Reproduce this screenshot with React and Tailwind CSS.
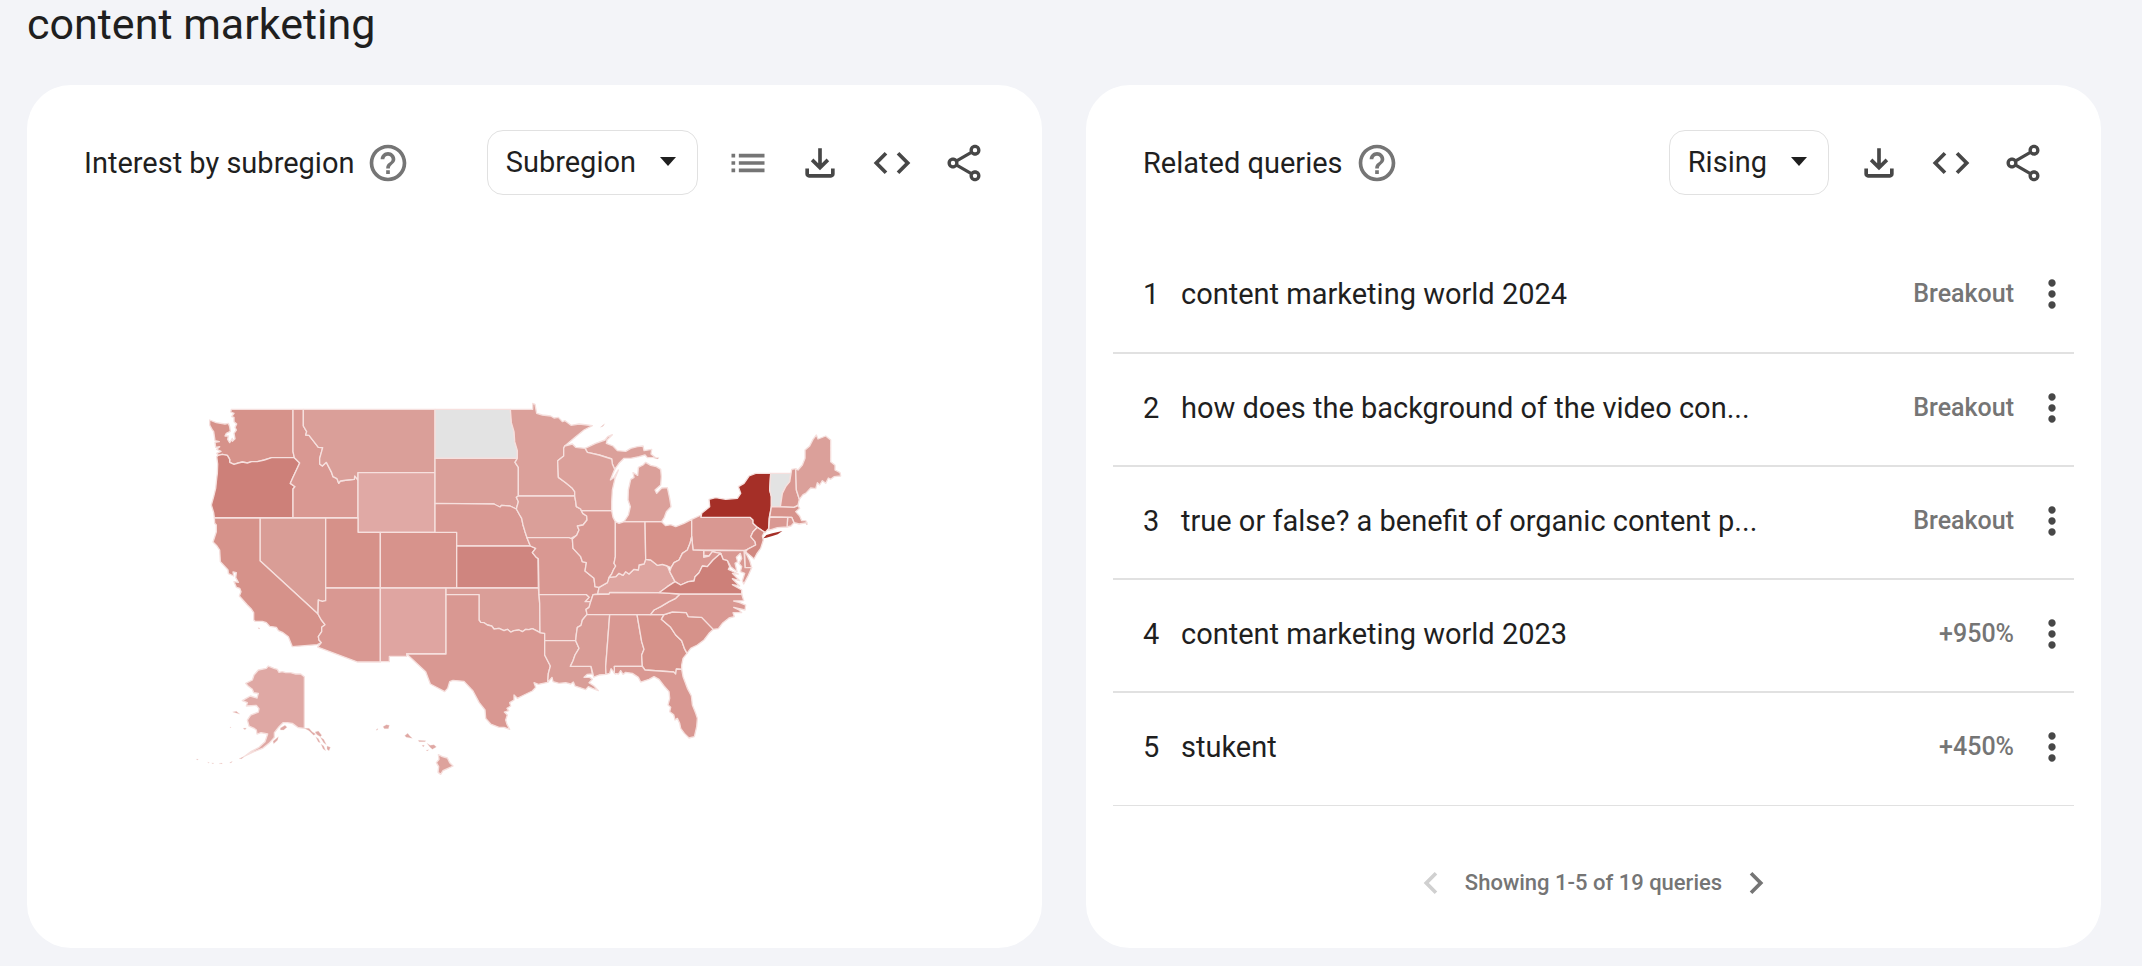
import React, { useState } from 'react';

const STATES = [
  { id: 'WA', fill: '#d6928a', points: '157,58 342,58 342,185 346,203 278,203 256,210 235,215 218,215 205,219 190,216 178,219 165,223 152,217 152,208 145,196 130,193 118,196 113,190 126,184 113,178 122,170 110,172 108,157 121,155 108,152 104,125 99,118 92,105 92,90 112,98 138,102 148,100 152,110 154,124 142,130 138,138 148,138 146,148 152,158 160,145 160,154 168,146 165,130 172,120 168,112 173,102 165,95 165,82 158,80 165,70 155,66' },
  { id: 'OR', fill: '#cd8079', points: '118,196 130,193 145,196 152,208 152,217 165,223 178,219 190,216 205,219 218,215 235,215 256,210 278,203 346,203 362,219 342,262 334,280 348,290 342,297 342,383 106,383 104,368 97,345 104,320 110,295 113,265 115,250 116,222 113,200' },
  { id: 'ID', fill: '#d99892', points: '342,58 373,58 373,108 383,125 380,135 390,136 418,172 431,173 422,205 422,222 430,228 442,217 458,248 462,260 474,266 479,280 484,273 505,270 526,268 527,258 537,270 537,383 342,383 342,297 348,290 334,280 342,262 362,219 346,203 342,185' },
  { id: 'MT', fill: '#da9f99', points: '373,58 768,58 768,248 537,248 537,270 527,258 526,268 505,270 484,273 479,280 474,266 462,260 458,248 442,217 430,228 422,222 422,205 431,173 418,172 390,136 380,135 383,125 373,108' },
  { id: 'WY', fill: '#e0a9a5', points: '537,248 768,248 768,427 537,427' },
  { id: 'NV', fill: '#d99d96', points: '243,384 440,384 440,632 430,634 418,630 417,672 243,512' },
  { id: 'UT', fill: '#d69189', points: '440,384 537,384 537,427 604,427 604,594 440,594' },
  { id: 'CA', fill: '#d6928a', points: '106,384 243,384 243,512 417,672 427,690 438,704 428,712 428,725 418,740 420,750 427,758 415,764 340,770 328,740 312,728 298,722 292,712 272,709 262,698 250,694 228,694 224,690 224,668 216,656 205,645 181,618 186,605 182,595 172,592 165,575 178,577 170,563 172,548 162,546 164,558 148,551 147,540 124,515 122,480 114,468 102,456 112,425 112,405 107,400' },
  { id: 'AZ', fill: '#d99892', points: '440,594 604,594 604,816 536,816 416,771 427,758 420,750 418,740 428,725 428,712 438,704 427,690 417,672 418,630 430,634 440,632' },
  { id: 'CO', fill: '#d7938c', points: '604,427 833,427 833,594 604,594' },
  { id: 'NM', fill: '#dfa5a1', points: '604,594 801,594 801,791 683,791 683,799 631,799 631,815 604,815' },
  { id: 'ND', fill: '#e3e3e3', points: '768,58 994,58 997,98 1005,125 1007,155 1015,182 1015,205 768,205' },
  { id: 'SD', fill: '#da9f99', points: '768,205 1015,205 1008,217 1018,232 1018,318 1012,322 1018,335 1012,357 993,348 968,346 963,351 950,348 945,342 768,340' },
  { id: 'NE', fill: '#d99892', points: '768,340 945,342 963,351 968,346 993,348 1012,357 1022,375 1028,385 1032,405 1038,425 1044,443 1054,468 833,468 833,427 768,427' },
  { id: 'KS', fill: '#cf857f', points: '833,468 1054,468 1070,475 1060,488 1070,500 1077,506 1078,594 833,594' },
  { id: 'OK', fill: '#da9e98', points: '801,594 1078,594 1082,640 1083,728 1072,722 1060,716 1050,719 1040,718 1030,725 1020,720 1005,722 995,726 985,718 975,722 960,715 945,717 938,708 925,705 915,698 905,697 900,690 900,614 801,614' },
  { id: 'TX', fill: '#d99892', points: '801,614 900,614 900,690 905,697 915,698 925,705 938,708 945,717 960,715 975,722 985,718 995,726 1005,722 1020,720 1030,725 1040,718 1050,719 1060,716 1072,722 1083,728 1097,730 1097,795 1114,828 1108,850 1106,877 1078,883 1065,878 1070,892 1060,903 1035,915 1015,925 1005,915 1005,930 992,938 995,948 984,955 989,962 976,966 985,975 980,990 984,1003 992,1018 975,1012 960,1012 935,1002 920,985 918,960 900,937 882,903 855,874 822,871 812,875 806,895 797,905 754,882 740,845 683,792 801,792' },
  { id: 'MN', fill: '#dba09a', points: '994,58 1061,58 1061,40 1068,43 1073,70 1090,75 1115,78 1125,84 1138,82 1150,95 1158,92 1176,106 1200,102 1225,105 1240,107 1215,120 1190,140 1157,168 1154,175 1154,198 1136,212 1138,262 1160,278 1180,295 1187,305 1187,318 1018,318 1018,232 1008,217 1015,205 1015,182 1007,155 1005,125 997,98' },
  { id: 'IA', fill: '#da9f99', points: '1018,318 1187,318 1190,335 1192,350 1205,357 1211,370 1223,378 1224,390 1212,405 1195,408 1200,420 1193,436 1180,443 1174,447 1170,443 1044,443 1038,425 1032,405 1028,385 1022,375 1012,357 1018,335 1012,322' },
  { id: 'MO', fill: '#d99892', points: '1044,443 1170,443 1180,447 1182,475 1205,500 1210,515 1222,518 1218,543 1245,565 1248,590 1260,592 1256,612 1242,614 1235,635 1218,635 1230,622 1222,614 1080,614 1078,506 1070,500 1060,488 1070,475 1054,468' },
  { id: 'AR', fill: '#da9d98', points: '1080,614 1222,614 1230,622 1218,635 1235,635 1230,652 1221,658 1224,673 1210,690 1206,706 1195,712 1192,732 1190,752 1097,752 1097,730 1083,728 1082,640' },
  { id: 'LA', fill: '#d99d97', points: '1097,752 1190,752 1200,775 1188,795 1182,812 1174,829 1236,829 1240,852 1225,853 1215,862 1232,862 1240,868 1230,878 1245,888 1258,902 1240,895 1228,890 1220,899 1200,892 1188,888 1183,876 1175,882 1160,878 1140,880 1122,875 1119,862 1106,877 1108,850 1114,828 1097,795' },
  { id: 'MS', fill: '#d99c96', points: '1224,673 1292,674 1290,700 1280,830 1281,853 1260,855 1244,861 1236,829 1174,829 1182,812 1188,795 1200,775 1190,752 1192,732 1195,712 1206,706 1210,690' },
  { id: 'AL', fill: '#d99892', points: '1292,674 1374,674 1388,755 1395,778 1388,795 1390,829 1306,829 1309,852 1296,836 1292,850 1281,853 1280,830 1290,700' },
  { id: 'GA', fill: '#d6928a', points: '1374,674 1455,674 1447,688 1475,712 1490,735 1508,752 1516,775 1524,790 1512,805 1508,825 1508,838 1492,837 1490,852 1484,846 1398,840 1390,829 1388,795 1395,778 1388,755' },
  { id: 'FL', fill: '#d99892', points: '1306,829 1390,829 1398,840 1484,846 1490,852 1492,837 1508,838 1512,860 1525,895 1537,918 1540,945 1550,970 1555,985 1553,1010 1546,1040 1530,1044 1516,1030 1505,1015 1502,1000 1495,985 1488,990 1484,974 1472,965 1475,952 1467,945 1472,925 1470,905 1455,888 1440,868 1425,860 1410,868 1385,876 1378,862 1360,850 1340,847 1332,853 1325,842 1318,852 1306,850' },
  { id: 'SC', fill: '#d6928a', points: '1455,674 1480,666 1522,668 1528,680 1568,682 1603,718 1590,730 1575,750 1555,765 1535,775 1524,790 1516,775 1508,752 1490,735 1475,712 1447,688' },
  { id: 'NC', fill: '#d99892', points: '1503,612 1688,612 1694,632 1664,633 1680,637 1700,645 1698,660 1664,652 1680,660 1688,668 1662,668 1666,680 1650,684 1630,700 1618,716 1603,718 1568,682 1528,680 1522,668 1480,666 1455,674 1414,674 1425,660 1445,650 1470,635 1490,625' },
  { id: 'TN', fill: '#d99892', points: '1242,614 1290,612 1292,607 1440,608 1503,612 1490,625 1470,635 1445,650 1425,660 1414,674 1224,673 1221,658 1230,652 1235,635' },
  { id: 'KY', fill: '#dea5a0', points: '1256,612 1260,592 1285,578 1290,562 1310,560 1320,550 1332,556 1340,545 1350,552 1365,538 1378,540 1380,525 1395,522 1400,508 1415,510 1435,526 1450,523 1465,528 1472,545 1488,575 1465,590 1440,608 1292,607 1290,612' },
  { id: 'IL', fill: '#d99892', points: '1207,362 1298,362 1302,382 1309,395 1309,500 1305,520 1310,528 1303,540 1298,552 1290,562 1285,578 1260,592 1248,590 1245,565 1218,543 1222,518 1210,515 1205,500 1182,475 1180,447 1193,436 1200,420 1195,408 1212,405 1224,390 1223,378 1211,370' },
  { id: 'IN', fill: '#d99892', points: '1309,395 1320,400 1335,395 1398,395 1400,508 1395,522 1380,525 1378,540 1365,538 1350,552 1340,545 1332,556 1320,550 1310,560 1290,562 1298,552 1303,540 1310,528 1305,520 1309,500' },
  { id: 'OH', fill: '#d7928a', points: '1398,395 1448,395 1460,407 1475,404 1490,410 1515,400 1538,388 1538,440 1533,460 1525,480 1510,490 1500,510 1485,518 1476,533 1465,528 1450,523 1435,526 1415,510 1400,508' },
  { id: 'MI', fill: '#dba09a', points: '1335,395 1348,375 1354,350 1347,330 1348,300 1355,268 1365,262 1362,248 1376,256 1378,232 1392,225 1400,217 1415,226 1432,230 1445,238 1447,260 1445,285 1428,300 1433,310 1448,294 1465,293 1472,325 1476,350 1462,365 1456,382 1448,395' },
  { id: 'MI-upper', fill: '#dba09a', points: '1218,175 1250,160 1278,150 1286,140 1300,134 1284,150 1282,160 1302,168 1315,182 1340,184 1355,175 1375,170 1392,168 1395,182 1418,178 1416,192 1428,202 1405,203 1398,195 1380,200 1355,205 1335,205 1320,220 1307,238 1300,222 1298,207 1260,195 1225,187' },
  { id: 'WI', fill: '#dba09a', points: '1157,168 1180,162 1190,172 1218,175 1225,187 1260,195 1298,207 1300,222 1307,238 1302,250 1294,270 1305,262 1318,240 1308,265 1300,300 1298,335 1298,362 1207,362 1205,357 1192,350 1190,335 1187,318 1187,305 1180,295 1160,278 1138,262 1136,212 1154,198 1154,175' },
  { id: 'PA', fill: '#d99892', points: '1538,388 1566,375 1566,382 1713,382 1722,390 1722,400 1735,412 1722,425 1715,440 1728,455 1730,465 1705,478 1697,481 1542,480 1538,440' },
  { id: 'NY', fill: '#a52f27', points: '1566,382 1568,370 1592,350 1590,328 1610,323 1640,328 1675,325 1685,310 1678,290 1695,280 1710,258 1730,250 1775,250 1772,300 1777,320 1777,350 1770,385 1769,415 1758,428 1735,412 1722,400 1722,390 1713,382' },
  { id: 'VT', fill: '#e3e3e3', points: '1775,250 1835,250 1832,275 1820,290 1810,310 1804,350 1777,350 1777,320 1772,300' },
  { id: 'NH', fill: '#d99892', points: '1838,238 1850,236 1852,300 1861,328 1857,345 1845,352 1804,350 1810,310 1820,290 1832,275' },
  { id: 'ME', fill: '#dba09a', points: '1850,236 1857,240 1870,225 1878,205 1878,180 1892,168 1902,148 1912,135 1917,147 1940,138 1955,150 1955,215 1968,226 1968,240 1983,248 1985,258 1965,260 1955,268 1948,264 1940,280 1930,272 1922,285 1915,278 1910,296 1895,294 1880,310 1872,314 1861,328 1852,300' },
  { id: 'MA', fill: '#d7938c', points: '1777,350 1845,352 1857,347 1862,355 1850,365 1862,378 1868,392 1880,392 1884,398 1860,402 1845,398 1838,382 1772,381' },
  { id: 'RI', fill: '#d99892', points: '1826,382 1838,382 1845,398 1836,408 1824,411' },
  { id: 'CT', fill: '#d99892', points: '1772,381 1826,382 1824,411 1795,413 1769,421' },
  { id: 'NJ', fill: '#d18880', points: '1735,412 1756,426 1750,438 1753,450 1745,475 1733,492 1725,507 1715,498 1700,486 1705,478 1730,465 1728,455 1715,440 1722,425' },
  { id: 'DE', fill: '#d99892', points: '1697,481 1702,492 1712,512 1718,533 1698,533' },
  { id: 'MD', fill: '#d99892', points: '1574,481 1695,482 1698,533 1718,533 1708,556 1694,582 1690,572 1697,550 1684,545 1688,530 1680,520 1688,505 1684,490 1672,502 1676,515 1668,520 1674,545 1655,530 1645,512 1632,508 1625,490 1612,488 1600,485 1590,498 1578,496 1574,502' },
  { id: 'WV', fill: '#d99892', points: '1538,440 1542,480 1574,481 1574,502 1590,498 1600,485 1612,488 1625,490 1602,510 1585,530 1570,528 1560,548 1548,560 1545,573 1528,575 1505,585 1488,575 1472,545 1476,533 1485,518 1500,510 1510,490 1525,480 1533,460' },
  { id: 'VA', fill: '#cd8079', points: '1440,608 1465,590 1488,575 1505,585 1528,575 1545,573 1548,560 1560,548 1570,528 1585,530 1602,510 1625,490 1632,508 1645,512 1652,530 1648,538 1678,552 1660,550 1682,572 1660,566 1682,588 1660,584 1688,600 1688,612 1503,612' },
  { id: 'AK', fill: '#dfa8a4', points: '376,860 365,852 350,852 335,848 320,848 310,845 300,847 295,838 285,835 268,828 262,835 238,840 225,855 220,870 200,880 207,888 220,898 224,908 238,910 234,924 214,918 200,926 190,932 205,938 202,948 232,946 240,956 238,966 215,975 205,990 210,1008 224,1014 232,1020 234,1032 246,1028 266,1032 258,1055 240,1072 215,1085 198,1098 225,1085 252,1074 270,1060 286,1042 286,1028 300,1010 312,998 325,998 340,1000 358,1013 376,1015' },
  { id: 'HI', fill: '#dda29c', points: '778,1094 790,1100 805,1104 812,1118 822,1128 805,1136 792,1142 785,1153 777,1147 779,1130 772,1118 780,1108' },
];

const LONG_ISLAND = '1753,445 1762,435 1780,430 1810,423 1796,433 1780,438 1762,443';

const ISLANDS = [
  '612,1010 622,1004 631,1006 628,1016 616,1016',
  '592,1021 593,1017 597,1016 595,1020',
  '677,1037 686,1030 692,1037 700,1045 682,1042',
  '718,1051 740,1052 738,1055 720,1055',
  '729,1066 736,1066 733,1071',
  '744,1060 753,1066 765,1064 772,1071 760,1078 753,1072',
  '741,1081 749,1079 745,1083',
  '304,1014 318,1006 324,1012 314,1020 304,1020',
  '282,1054 298,1040 296,1050 284,1061',
  '161,966 172,964 182,972 174,970',
  '192,1015 202,1014 198,1019',
  '376,1015 390,1015 400,1026 410,1032 404,1036 390,1022',
  '408,1026 418,1023 428,1036 424,1040 414,1034',
  '410,1040 418,1046 424,1058 418,1056',
  '424,1042 434,1048 442,1064 434,1058',
  '426,1062 434,1068 440,1082 432,1076',
  '444,1068 454,1072 450,1082 444,1078',
  '180,1106 198,1098 188,1106',
  '152,1118 160,1114 156,1119',
  '120,1121 128,1119 130,1121',
  '98,1119 104,1119 102,1121',
  '86,1117 91,1118 88,1119',
  '52,1107 58,1108 55,1110',
  '153,1011 156,1012 154,1014',
  '237,713 243,715 240,717',
  '1264,112 1277,101 1272,109',
  '1422,203 1440,203 1436,207',
  '1880,400 1887,402 1882,404',
];

const QUERIES = [
  { rank: 1, text: 'content marketing world 2024', change: 'Breakout' },
  { rank: 2, text: 'how does the background of the video con...', change: 'Breakout' },
  { rank: 3, text: 'true or false? a benefit of organic content p...', change: 'Breakout' },
  { rank: 4, text: 'content marketing world 2023', change: '+950%' },
  { rank: 5, text: 'stukent', change: '+450%' },
];

const PATHS = {
  help: 'M11 18h2v-2h-2v2zm1-16C6.48 2 2 6.48 2 12s4.48 10 10 10 10-4.48 10-10S17.52 2 12 2zm0 18c-4.41 0-8-3.59-8-8s3.59-8 8-8 8 3.59 8 8-3.59 8-8 8zm0-14c-2.21 0-4 1.79-4 4h2c0-1.1.9-2 2-2s2 .9 2 2c0 2-3 1.75-3 5h2c0-2.25 3-2.5 3-5 0-2.21-1.79-4-4-4z',
  list: 'M3 9h2V7H3v2zm0 4h2v-2H3v2zm0 4h2v-2H3v2zm4-8h14V7H7v2zm0 4h14v-2H7v2zm0 4h14v-2H7v2z',
  download: 'M12 16l-5-5 1.4-1.45 2.6 2.6V4h2v8.15l2.6-2.6L17 11l-5 5zm-6 4c-.55 0-1.02-.2-1.41-.59C4.2 19.02 4 18.55 4 18v-3h2v3h12v-3h2v3c0 .55-.2 1.02-.59 1.41-.39.39-.86.59-1.41.59H6z',
  code: 'M8 18l-6-6 6-6 1.43 1.43L4.85 12l4.58 4.57L8 18zm8 0l-1.43-1.43L19.15 12l-4.58-4.57L16 6l6 6-6 6z',
  share: 'M18 16c-.79 0-1.5.31-2.03.81L8.91 12.7c.05-.23.09-.46.09-.7s-.04-.47-.09-.7l7.05-4.11c.54.5 1.25.81 2.04.81 1.66 0 3-1.34 3-3s-1.34-3-3-3-3 1.34-3 3c0 .24.04.48.09.7L8.04 9.81C7.5 9.31 6.79 9 6 9c-1.66 0-3 1.34-3 3s1.34 3 3 3c.79 0 1.5-.31 2.04-.81l7.05 4.12c-.05.22-.09.45-.09.69 0 1.66 1.34 3 3 3s3-1.34 3-3-1.34-3-3-3zm0-12.2a1.2 1.2 0 110 2.4 1.2 1.2 0 010-2.4zM6 13.2a1.2 1.2 0 110-2.4 1.2 1.2 0 010 2.4zm12 7a1.2 1.2 0 110-2.4 1.2 1.2 0 010 2.4z',
  more: 'M12 8c1.1 0 2-.9 2-2s-.9-2-2-2-2 .9-2 2 .9 2 2 2zm0 2c-1.1 0-2 .9-2 2s.9 2 2 2 2-.9 2-2-.9-2-2-2zm0 6c-1.1 0-2 .9-2 2s.9 2 2 2 2-.9 2-2-.9-2-2-2z',
  prev: 'M15.41 7.41L14 6l-6 6 6 6 1.41-1.41L10.83 12z',
  next: 'M8.59 16.59L10 18l6-6-6-6-1.41 1.41L13.17 12z',
};

const IconButton = ({ label, icon, className = 'text-[#474747]', ...props }) => (
  <button type="button" aria-label={label} className={`cursor-pointer disabled:cursor-default ${className}`} {...props}>
    <svg viewBox="0 0 24 24" fill="currentColor" className="h-11 w-11" aria-hidden="true">
      <path d={PATHS[icon]} />
    </svg>
  </button>
);

const Dropdown = ({ label, options }) => {
  const [value, setValue] = useState(options[0]);

  return (
    <div className="relative">
      <select
        aria-label={label}
        value={value}
        onChange={(e) => setValue(e.target.value)}
        className="block field-sizing-content h-[65px] appearance-none rounded-2xl border border-[#e1e1e1] bg-white pr-[61px] pb-0.5 pl-[18px]"
      >
        {options.map((option) => (
          <option key={option}>{option}</option>
        ))}
      </select>
      <svg viewBox="0 0 16 9" className="pointer-events-none absolute top-[27px] right-[22px] w-4" aria-hidden="true">
        <path d="M0 0h16L8 9z" fill="#1f1f1f" />
      </svg>
    </div>
  );
};

const CardHeader = ({ title, filter, children }) => (
  <header className="flex items-center pt-[45px] pr-14 pl-[57px]">
    <h2>{title}</h2>
    <IconButton label={`About ${title}`} icon="help" className="ml-3 text-[#757575]" />
    <div className="ml-auto flex items-center gap-7">
      {filter}
      {children}
      <IconButton label="Download CSV" icon="download" />
      <IconButton label="Embed" icon="code" />
      <IconButton label="Share" icon="share" />
    </div>
  </header>
);

const UsMap = () => (
  <svg viewBox="45 0 2040 1200" className="w-[67%]" role="img" aria-label="Interest by subregion">
    <g stroke="#f6e0de" strokeWidth="4" strokeLinejoin="round">
      {STATES.map((state) => (
        <polygon key={state.id} points={state.points} fill={state.fill} />
      ))}
    </g>
    <g fill="#dfa8a4" stroke="#f6e0de" strokeWidth="1">
      {ISLANDS.map((points) => (
        <polygon key={points} points={points} />
      ))}
    </g>
    <polygon points={LONG_ISLAND} fill="#a52f27" />
  </svg>
);

const QueryTable = () => (
  <table className="mt-[45px] w-full border-collapse">
    <tbody>
      {QUERIES.map((query) => (
        <tr key={query.rank} className="h-[113px] border-b-2 border-[#e1e1e1] last:border-b">
          <td className="w-[68px] pb-1 pl-[30px]">{query.rank}</td>
          <td className="pb-1">{query.text}</td>
          <td className="pb-1 text-right text-[25px] font-medium text-[#757575]">{query.change}</td>
          <td className="w-[58px] pb-1">
            <IconButton label={`More options for ${query.text}`} icon="more" className="ml-4 block text-[#474747]" />
          </td>
        </tr>
      ))}
    </tbody>
  </table>
);

export default function App() {
  return (
    <main className="min-h-screen bg-[#f3f4f8] pr-[41px] pb-[18px] pl-[27px] font-[Roboto,sans-serif] text-[29px] leading-9 text-[#1f1f1f]">
      <h1 className="pb-[37px] text-[43px] leading-[48px]">content marketing</h1>

      <div className="grid grid-cols-2 gap-11">
        <section className="flex flex-col rounded-[44px] bg-white">
          <CardHeader
            title="Interest by subregion"
            filter={<Dropdown label="Region type" options={['Subregion', 'Metro', 'City']} />}
          >
            <IconButton label="Show as list" icon="list" className="text-[#757575]" />
          </CardHeader>
          <div className="flex justify-center pt-[195px]">
            <UsMap />
          </div>
        </section>

        <section className="flex flex-col rounded-[44px] bg-white">
          <CardHeader
            title="Related queries"
            filter={<Dropdown label="Sort queries" options={['Rising', 'Top']} />}
          />
          <div className="px-[27px]">
            <QueryTable />
          </div>
          <nav aria-label="Query pages" className="flex items-center justify-center gap-3 pt-[55px] pb-[43px] text-[22px] font-medium text-[#757575]">
            <IconButton label="Previous" icon="prev" disabled className="text-[#d0d0d0]" />
            <span>Showing 1-5 of 19 queries</span>
            <IconButton label="Next" icon="next" className="text-[#757575]" />
          </nav>
        </section>
      </div>
    </main>
  );
}
